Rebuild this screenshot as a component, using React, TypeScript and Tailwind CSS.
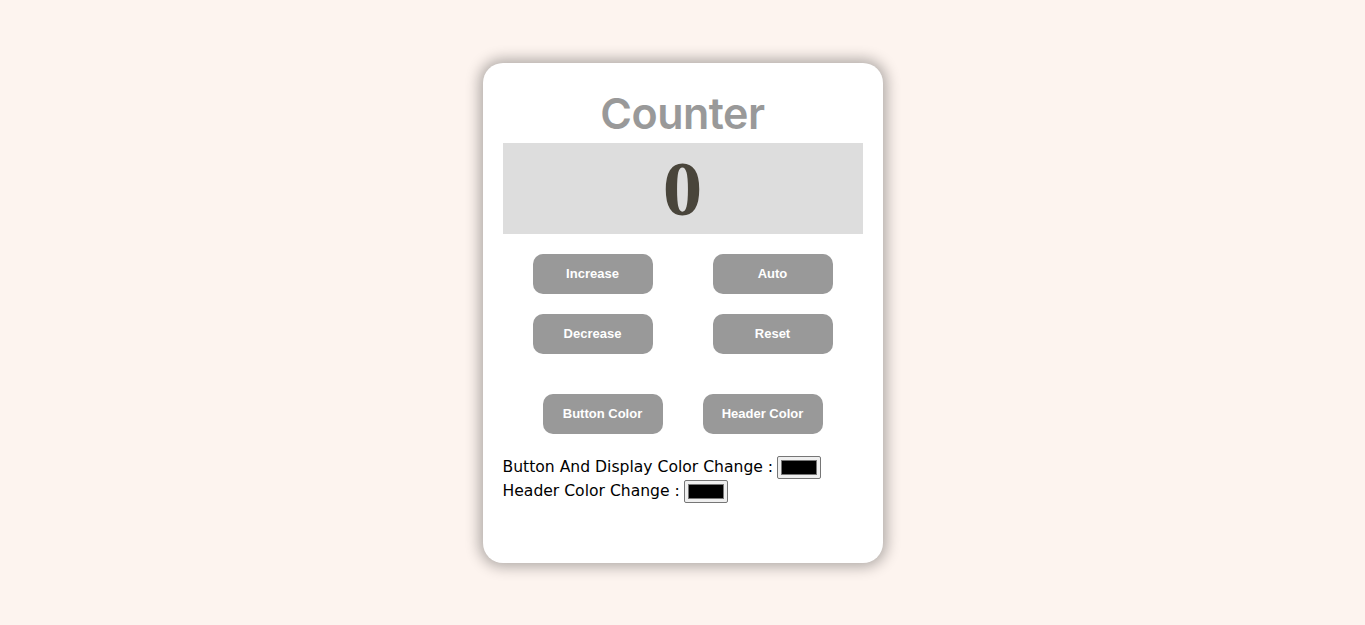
import { useState } from "react";

const btn =
  "w-[120px] h-10 rounded-[10px] bg-[#999999] text-white text-[13px] font-semibold font-['Liberation_Sans',Arial,sans-serif]";

const Swatch = ({ color }: { color: string }) => (
  <span className="inline-flex align-middle ml-1 w-[44px] h-[23px] items-center justify-center rounded-[2px] border border-[#767676] bg-[#efefef]">
    <span className="block w-[36px] h-[15px] border border-[#777]" style={{ background: color }} />
  </span>
);

const App = () => {
  const [count, setCount] = useState<number>(0);
  const [btnColor] = useState<string>("#000000");
  const [headColor] = useState<string>("#000000");

  return (
    <div className="min-h-[625px] w-full bg-[#fdf4ef] flex justify-center pt-[63px]">
      <div className="w-[400px] h-[500px] bg-white rounded-[20px] shadow-[0_0_14px_4px_rgba(0,0,0,0.3)] px-5 pt-5">
        <h1 className="h-[60px] flex items-center justify-center text-[43px] font-semibold tracking-[-0.5px] text-[#999999] font-['Inter','Noto_Sans',sans-serif]">
          Counter
        </h1>
        <div className="h-[91px] bg-[#dddddd] flex items-center justify-center">
          <span className="text-[79px] leading-none font-bold text-[#49453b] font-['Liberation_Serif','Times_New_Roman',serif]">
            {count}
          </span>
        </div>
        <div className="mt-5 grid grid-cols-2 gap-x-[60px] gap-y-5 w-[300px] mx-auto">
          <button className={btn} onClick={() => setCount(count + 1)}>Increase</button>
          <button className={btn}>Auto</button>
          <button className={btn} onClick={() => setCount(count - 1)}>Decrease</button>
          <button className={btn} onClick={() => setCount(0)}>Reset</button>
        </div>
        <div className="mt-10 flex justify-center gap-10">
          <button className={btn}>Button Color</button>
          <button className={btn}>Header Color</button>
        </div>
        <div className="mt-[21px] text-[15.6px] leading-6 text-black font-['Comic_Sans_MS','DejaVu_Sans',cursive]">
          <div>
            Button And Display Color Change :
            <Swatch color={btnColor} />
          </div>
          <div>
            Header Color Change :
            <Swatch color={headColor} />
          </div>
        </div>
      </div>
    </div>
  );
};

export default App;
